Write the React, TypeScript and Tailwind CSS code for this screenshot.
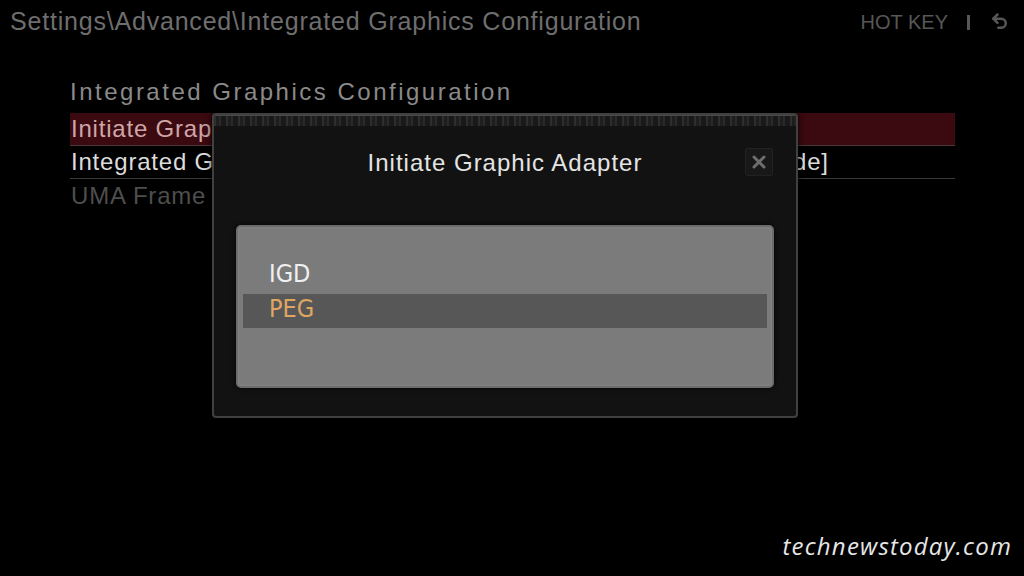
import { useState } from "react";

type Row = { label: string; value: string; tone: "active" | "normal" | "dim" };

const rows: Row[] = [
  { label: "Initiate Graphic Adapter", value: "[PEG]", tone: "active" },
  { label: "Integrated Graphics Share Memory", value: "[Shared Memory Mode]", tone: "normal" },
  { label: "UMA Frame Buffer Size", value: "", tone: "dim" },
];

const options = ["IGD", "PEG"];

function UndoIcon() {
  return (
    <svg width="20" height="20" viewBox="0 0 24 24" fill="none" stroke="currentColor" strokeWidth="3" strokeLinecap="round" strokeLinejoin="round">
      <path d="M9 3 4 8l5 5" />
      <path d="M4 8h9.5a5.5 5.5 0 0 1 0 11H10" />
    </svg>
  );
}

export default function App() {
  const [selected] = useState(1);

  return (
    <div className="relative w-[1024px] h-[576px] overflow-hidden bg-black font-['Liberation_Sans',Arial,sans-serif]">
      {/* top bar */}
      <header className="flex items-center h-[44px] pl-[10px] pr-[14px]">
        <div className="text-[25px] tracking-[0.8px] text-[#6e6e6e]">
          {"Settings\\Advanced\\Integrated Graphics Configuration"}
        </div>
        <div className="ml-auto flex items-center text-[#575757]">
          <span className="text-[20px]">HOT KEY</span>
          <span className="ml-[19px] w-[3px] h-[15px] bg-[#575757]" />
          <span className="ml-[20px]">
            <UndoIcon />
          </span>
        </div>
      </header>

      {/* settings list */}
      <section className="pl-[70px] pr-[69px]">
        <h2 className="mt-[34px] mb-[7px] h-[28px] leading-[28px] text-[24px] tracking-[2.5px] text-[#8a8a8a]">
          Integrated Graphics Configuration
        </h2>
        {rows.map((r) => (
          <div
            key={r.label}
            className={
              r.tone === "active"
                ? "flex items-center h-[33px] border-b border-[#4a3a3c] bg-[#3b0910] text-[#cfa6a8] text-[24px] tracking-[0.8px]"
                : r.tone === "normal"
                ? "flex items-center h-[33px] border-b border-[#3a3a3a] text-[#dcdcdc] text-[24px] tracking-[0.8px]"
                : "flex items-center h-[33px] text-[#4e4e4e] text-[24px] tracking-[0.8px]"
            }
          >
            <span className="pl-[1px] w-[492px] whitespace-nowrap">{r.label}</span>
            <span className="whitespace-nowrap">{r.value}</span>
          </div>
        ))}
      </section>

      {/* popup dialog */}
      <div className="absolute left-[212px] top-[113px] w-[586px] h-[305px] flex flex-col rounded-[4px] border-2 border-[#404040] bg-[#121212] shadow-[0_0_6px_rgba(0,0,0,0.9)]">
        <div className="h-[11px] rounded-t-[2px] border-t border-[#4a4a4a] bg-[repeating-linear-gradient(90deg,#2e2e2e_0_2px,#1e1e1e_2px_5px,#2a2a2a_5px_7px,#191919_7px_12px)]" />
        <div className="relative flex items-center justify-center h-[73px]">
          <span className="text-[24px] tracking-[1px] text-[#e4e4e4]">Initiate Graphic Adapter</span>
          <button className="absolute right-[23px] top-[22px] w-[28px] h-[28px] flex items-center justify-center rounded-[2px] border border-[#222] bg-[#181818] text-[#6e6e6e]">
            <svg width="14" height="14" viewBox="0 0 14 14" stroke="currentColor" strokeWidth="3" strokeLinecap="round">
              <path d="M2 2l10 10M12 2 2 12" />
            </svg>
          </button>
        </div>
        <div className="mt-[26px] mx-[22px] h-[163px] rounded-[5px] border-2 border-[#6c6c6c] bg-[#7b7b7b] shadow-[0_0_5px_rgba(0,0,0,0.8),inset_0_0_3px_rgba(255,255,255,0.15)] pt-[29px] px-[5px]">
          {options.map((o, i) => (
            <div
              key={o}
              className={
                i === selected
                  ? "flex items-center h-[34px] mt-[2px] pl-[26px] pb-[4px] bg-[#575757] text-[#dfa662] text-[25px] font-['DejaVu_Sans_Condensed',sans-serif]"
                  : "flex items-center h-[36px] pl-[26px] text-[#f0f0f0] text-[25px] font-['DejaVu_Sans_Condensed',sans-serif]"
              }
            >
              {o}
            </div>
          ))}
        </div>
      </div>

      {/* site mark */}
      <div className="absolute right-[12px] bottom-[12px] text-[24px] italic tracking-[1.2px] text-[#e6e6e6] font-['Open_Sans',sans-serif]">
        technewstoday.com
      </div>
    </div>
  );
}
